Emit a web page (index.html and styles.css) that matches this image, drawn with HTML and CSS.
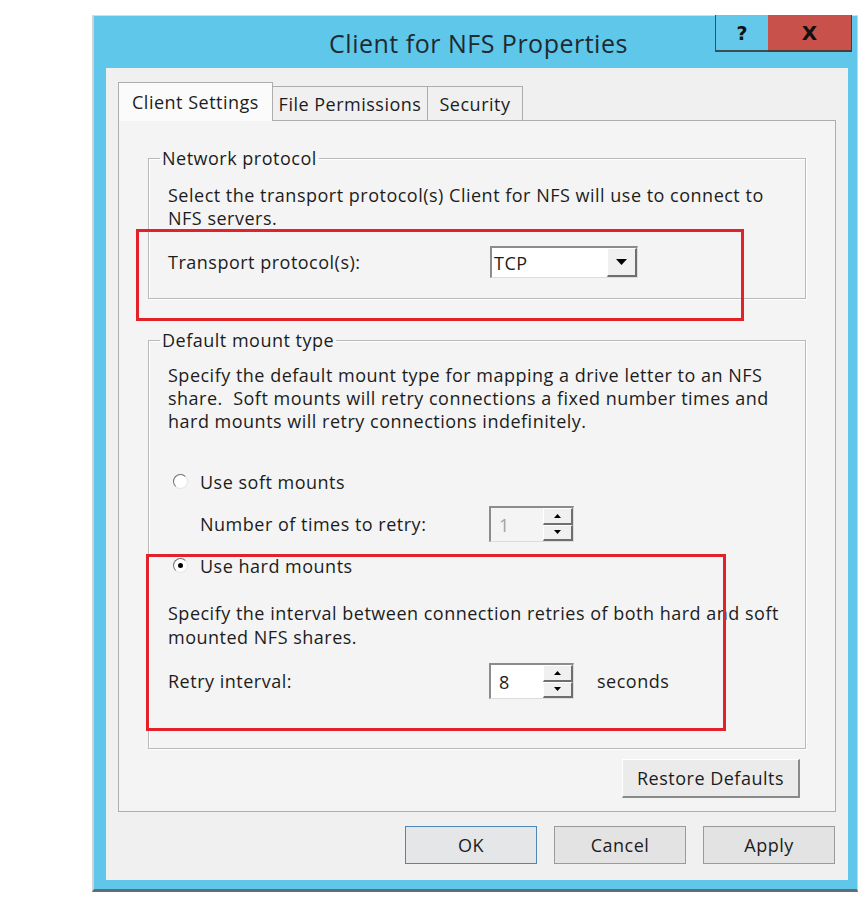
FILE: index.html
```html
<!DOCTYPE html>
<html lang="en">
<head>
<meta charset="utf-8">
<title>Client for NFS Properties</title>
<link rel="stylesheet" href="styles.css">
</head>
<body>
<div class="window">
  <div class="titlebar">
    <div class="title">Client for NFS Properties</div>
    <div class="caption-btns">
      <div class="cap help">?</div>
      <div class="cap close">X</div>
    </div>
  </div>
  <div class="client">
    <div class="tabs">
      <div class="tab active">Client Settings</div>
      <div class="tab tab-fp">File Permissions</div>
      <div class="tab tab-sec">Security</div>
    </div>
    <div class="panel">
      <fieldset class="group g1">
        <legend>Network protocol</legend>
        <div class="gbody">
          <p class="desc d1">Select the transport protocol(s) Client for NFS will use to connect to<br>NFS servers.</p>
          <div class="row row-tp">
            <span class="label">Transport protocol(s):</span>
            <div class="combo">
              <span class="combo-val">TCP</span>
              <span class="combo-btn"><svg width="11" height="6" viewBox="0 0 11 6"><path d="M0 0H11L5.5 6Z" fill="#000"/></svg></span>
            </div>
          </div>
        </div>
      </fieldset>
      <fieldset class="group g2">
        <legend>Default mount type</legend>
        <div class="gbody">
          <p class="desc d2">Specify the default mount type for mapping a drive letter to an NFS<br>share.&nbsp; Soft mounts will retry connections a fixed number times and<br>hard mounts will retry connections indefinitely.</p>
          <div class="radio-row soft"><span class="radio"></span><span>Use soft mounts</span></div>
          <div class="row row-ind row-retry">
            <span class="label">Number of times to retry:</span>
            <div class="spin disabled">
              <span class="spin-val">1</span>
              <span class="spin-btns">
                <span class="sb"><svg width="7" height="4" viewBox="0 0 7 4"><path d="M3.5 0L7 4H0Z" fill="#000"/></svg></span>
                <span class="sb"><svg width="7" height="4" viewBox="0 0 7 4"><path d="M0 0H7L3.5 4Z" fill="#000"/></svg></span>
              </span>
            </div>
          </div>
          <div class="radio-row hard"><span class="radio checked"></span><span>Use hard mounts</span></div>
          <p class="desc d3">Specify the interval between connection retries of both hard and soft<br>mounted NFS shares.</p>
          <div class="row row-int">
            <span class="label">Retry interval:</span>
            <div class="spin">
              <span class="spin-val">8</span>
              <span class="spin-btns">
                <span class="sb"><svg width="7" height="4" viewBox="0 0 7 4"><path d="M3.5 0L7 4H0Z" fill="#000"/></svg></span>
                <span class="sb"><svg width="7" height="4" viewBox="0 0 7 4"><path d="M0 0H7L3.5 4Z" fill="#000"/></svg></span>
              </span>
            </div>
            <span class="unit">seconds</span>
          </div>
        </div>
      </fieldset>
      <div class="restore-row"><button class="btn restore">Restore Defaults</button></div>
    </div>
    <div class="actions">
      <button class="btn dlg ok">OK</button>
      <button class="btn dlg">Cancel</button>
      <button class="btn dlg">Apply</button>
    </div>
  </div>
</div>
<div class="redbox r1"></div>
<div class="redbox r2"></div>
</body>
</html>
```

FILE: styles.css
```css
html, body {
  margin: 0;
  padding: 0;
  background: #ffffff;
}
body {
  font-family: "Open Sans", "Noto Sans", sans-serif;
  color: #1c1c1c;
  font-size: 18px;
  letter-spacing: 0.5px;
}
.window {
  margin: 15px 0 0 92px;
  width: 766px;
  height: 877px;
  box-sizing: border-box;
  background: #5fc7e9;
  border-left: 2px solid #cfd4d6;
  border-top: 1px solid #d7dcdf;
  border-right: 1px solid #cfd4d6;
  border-bottom: 3px solid #5e6d76;
  display: flex;
  flex-direction: column;
}
.titlebar {
  height: 52px;
  flex: none;
  display: grid;
  grid-template-columns: 137px 1fr 137px;
  align-items: center;
}
.title {
  grid-column: 2;
  text-align: center;
  font-size: 25px;
  color: #1f2a30;
  padding-top: 2px;
  padding-left: 6px;
}
.caption-btns {
  grid-column: 3;
  align-self: start;
  display: flex;
  margin-top: -1px;
  margin-left: -5px;
  letter-spacing: 0;
}
.cap {
  height: 37px;
  box-sizing: border-box;
  display: flex;
  align-items: center;
  justify-content: center;
  font-family: "DejaVu Sans", sans-serif;
  font-weight: bold;
  color: #111;
}
.help {
  width: 53px;
  background: #63c8ea;
  border-left: 1px solid #3b4d57;
  border-bottom: 2px solid #3b4d57;
  font-size: 19px;
}
.close {
  width: 84px;
  background: #c8514b;
  border-bottom: 2px solid #4a3a3a;
  border-right: 1px solid #4a3a3a;
  font-size: 20px;
}
.client {
  flex: 1;
  margin: 0 9px 9px 12px;
  background: #f0f0f0;
  padding: 14px 12px 16px;
  display: flex;
  flex-direction: column;
}
.tabs {
  height: 38px;
  display: flex;
  align-items: flex-end;
  position: relative;
  z-index: 1;
}
.tab {
  height: 34px;
  box-sizing: border-box;
  border: 1px solid #adadad;
  border-bottom: none;
  background: #f0f0f0;
  display: flex;
  align-items: center;
  justify-content: center;
  font-size: 18px;
}
.tab.active {
  width: 155px;
  height: 39px;
  margin-bottom: -1px;
  background: #fbfbfb;
  padding-bottom: 1px;
}
.tab-fp {
  width: 155px;
  border-left: none;
}
.tab-sec {
  width: 95px;
  border-left: none;
}
.panel {
  flex: 1;
  border: 1px solid #adadad;
  background: #f4f4f4;
  padding: 0 29px 13px;
  display: flex;
  flex-direction: column;
}
.group {
  margin: 0;
  padding: 0 0 0 11px;
  border: 1px solid #b9b9b9;
  box-shadow: inset 1px 1px 0 #ffffff, 1px 1px 0 #ffffff;
  min-inline-size: 0;
}
.group legend {
  font-size: 18px;
  line-height: 22px;
  padding: 0 2px;
}
.gbody {
  padding-left: 8px;
}
.g1 {
  margin-top: 26px;
  height: 152px;
  box-sizing: border-box;
}
.g2 {
  margin-top: 30px;
  height: 420px;
  box-sizing: border-box;
}
.desc {
  margin: 0;
  line-height: 23px;
}
.d1 {
  padding-top: 15px;
}
.row {
  display: flex;
  align-items: center;
}
.row .label {
  width: 321px;
  flex: none;
}
.row-tp {
  margin-top: 16px;
}
.row-ind {
  padding-left: 32px;
}
.row-ind .label {
  width: 289px;
}
.d2 {
  padding-top: 13px;
}
.radio-row {
  display: flex;
  align-items: center;
  height: 23px;
  padding-left: 5px;
  gap: 12px;
}
.soft {
  margin-top: 37px;
}
.row-retry {
  margin-top: 13px;
}
.hard {
  margin-top: 12px;
}
.d3 {
  margin-top: 24px;
  line-height: 24px;
}
.row-int {
  margin-top: 14px;
}
.unit {
  margin-left: 23px;
}
.radio {
  width: 15px;
  height: 15px;
  box-sizing: border-box;
  border-radius: 50%;
  border: 1px solid;
  border-color: #6f6f6f #e6e6e6 #e6e6e6 #6f6f6f;
  background: #ffffff;
  position: relative;
}
.radio.checked::after {
  content: "";
  position: absolute;
  left: 4px;
  top: 4px;
  width: 5px;
  height: 5px;
  border-radius: 50%;
  background: #000;
}
.combo {
  width: 148px;
  height: 32px;
  box-sizing: border-box;
  display: flex;
  background: #ffffff;
  border-top: 2px solid #8c8c8c;
  border-left: 2px solid #8c8c8c;
  border-right: 1px solid #dcdcdc;
  border-bottom: 1px solid #dcdcdc;
  margin-left: 1px;
}
.combo-val {
  flex: 1;
  display: flex;
  align-items: center;
  padding-left: 2px;
}
.combo-btn {
  width: 30px;
  box-sizing: border-box;
  background: #f0f0f0;
  border-left: 1px solid #ffffff;
  border-top: 1px solid #ffffff;
  border-right: 2px solid #6e6e6e;
  border-bottom: 2px solid #6e6e6e;
  display: flex;
  align-items: center;
  justify-content: center;
}
.spin {
  width: 85px;
  height: 36px;
  box-sizing: border-box;
  display: flex;
  background: #ffffff;
  border-top: 2px solid #8c8c8c;
  border-left: 2px solid #8c8c8c;
  border-right: 1px solid #dcdcdc;
  border-bottom: 1px solid #dcdcdc;
}
.spin.disabled {
  background: #f4f4f4;
  color: #a3a3a3;
}
.spin-val {
  flex: 1;
  display: flex;
  align-items: center;
  padding-left: 8px;
}
.spin-btns {
  width: 30px;
  display: flex;
  flex-direction: column;
}
.sb {
  flex: 1;
  box-sizing: border-box;
  background: #f0f0f0;
  border-left: 1px solid #ffffff;
  border-top: 1px solid #ffffff;
  border-right: 2px solid #6e6e6e;
  border-bottom: 2px solid #6e6e6e;
  display: flex;
  align-items: center;
  justify-content: center;
}
.restore-row {
  display: flex;
  justify-content: flex-end;
  margin-top: 10px;
  padding-right: 6px;
}
.btn {
  font-family: "Open Sans", "Noto Sans", sans-serif;
  font-size: 18px;
  letter-spacing: 0.5px;
  color: #1c1c1c;
  margin: 0;
  padding: 0;
  box-sizing: border-box;
}
.restore {
  width: 178px;
  height: 39px;
  background: #ebebeb;
  border-top: 1px solid #ffffff;
  border-left: 1px solid #ffffff;
  border-right: 2px solid #8a8a8a;
  border-bottom: 2px solid #8a8a8a;
}
.actions {
  display: flex;
  justify-content: flex-end;
  gap: 17px;
  margin-top: 14px;
  padding-right: 1px;
}
.dlg {
  width: 132px;
  height: 38px;
  background: #e3e3e3;
  border: 1px solid #9a9a9a;
}
.dlg.ok {
  border: 1px solid #4c87b8;
  background: #e4e6e8;
}
.redbox {
  position: absolute;
  border: 3px solid #e3212a;
  box-sizing: border-box;
}
.r1 {
  left: 136px;
  top: 229px;
  width: 608px;
  height: 92px;
}
.r2 {
  left: 146px;
  top: 554px;
  width: 580px;
  height: 177px;
}
```
